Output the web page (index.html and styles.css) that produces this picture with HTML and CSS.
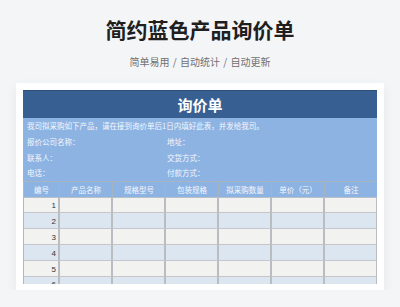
FILE: index.html
```html
<!DOCTYPE html>
<html lang="zh-CN">
<head>
<meta charset="utf-8">
<title>简约蓝色产品询价单</title>
<link rel="stylesheet" href="styles.css">
</head>
<body>
<div class="page">
  <h1 class="title">简约蓝色产品询价单</h1>
  <p class="subtitle">简单易用 / 自动统计 / 自动更新</p>
  <div class="card">
    <div class="sheet">
      <div class="sheet-title">询价单</div>
      <div class="info">
        <div class="info-cell full">我司拟采购如下产品，请在接到询价单后1日内填好此表，并发给我司。</div>
        <div class="info-cell">报价公司名称：</div>
        <div class="info-cell right">地址：</div>
        <div class="info-cell">联系人：</div>
        <div class="info-cell right">交货方式：</div>
        <div class="info-cell">电话：</div>
        <div class="info-cell right">付款方式：</div>
      </div>
      <div class="grid">
        <div class="th">编号</div>
        <div class="th">产品名称</div>
        <div class="th">规格型号</div>
        <div class="th">包装规格</div>
        <div class="th">拟采购数量</div>
        <div class="th">单价（元）</div>
        <div class="th">备注</div>

        <div class="td num">1</div><div class="td"></div><div class="td"></div><div class="td"></div><div class="td"></div><div class="td"></div><div class="td"></div>
        <div class="td num alt">2</div><div class="td alt"></div><div class="td alt"></div><div class="td alt"></div><div class="td alt"></div><div class="td alt"></div><div class="td alt"></div>
        <div class="td num">3</div><div class="td"></div><div class="td"></div><div class="td"></div><div class="td"></div><div class="td"></div><div class="td"></div>
        <div class="td num alt">4</div><div class="td alt"></div><div class="td alt"></div><div class="td alt"></div><div class="td alt"></div><div class="td alt"></div><div class="td alt"></div>
        <div class="td num">5</div><div class="td"></div><div class="td"></div><div class="td"></div><div class="td"></div><div class="td"></div><div class="td"></div>
        <div class="td num alt">6</div><div class="td alt"></div><div class="td alt"></div><div class="td alt"></div><div class="td alt"></div><div class="td alt"></div><div class="td alt"></div>
      </div>
    </div>
  </div>
</div>
</body>
</html>
```
FILE: styles.css
```css
* { box-sizing: border-box; }

html, body {
  margin: 0;
  padding: 0;
  background: #f4f5f7;
}

body {
  font-family: "Noto Sans CJK SC", "Noto Sans", sans-serif;
  color: #222;
}

.page {
  padding-top: 14px;
  display: flex;
  flex-direction: column;
  align-items: center;
}

.title {
  margin: 0;
  font-size: 21px;
  line-height: 30px;
  font-weight: 700;
  color: #1f1f1f;
}

.subtitle {
  margin: 11px 0 0;
  font-size: 10px;
  line-height: 14px;
  color: #707070;
  word-spacing: 1px;
}

.card {
  margin-top: 14px;
  width: 368px;
  height: 207px;
  background: #fff;
  padding: 7px 7px 6px;
  box-shadow: 0 4px 12px rgba(0, 0, 0, 0.06);
}

.sheet {
  height: 194px;
  overflow: hidden;
  display: flex;
  flex-direction: column;
}

.sheet-title {
  flex: 0 0 28px;
  background: #375f91;
  color: #fff;
  font-size: 15px;
  font-weight: 700;
  display: flex;
  align-items: center;
  justify-content: center;
  border-top: 1px solid #2e4f7a;
}

.info {
  display: grid;
  grid-template-columns: 142px 1fr;
  grid-auto-rows: 15.7px;
  background: #8db3e2;
  color: #f4f8fd;
  font-size: 7.5px;
}

.info-cell {
  display: flex;
  align-items: center;
  padding-left: 4px;
  white-space: nowrap;
}

.info-cell.full { grid-column: 1 / -1; }
.info-cell.right { padding-left: 2px; }

.grid {
  display: grid;
  grid-template-columns: 36px repeat(6, 53px);
  grid-auto-rows: 15.8px;
  border-left: 1px solid #b4b8bd;
  border-top: 1px solid #a9b4c2;
}

.th {
  background: #8db3e2;
  color: #f4f8fd;
  font-size: 7.5px;
  display: flex;
  align-items: center;
  justify-content: center;
  border-right: 1px solid #a6b3c3;
  border-bottom: 1px solid #b9c0c8;
  white-space: nowrap;
}

.td {
  background: #f2f2f0;
  border-right: 2px solid #b9bcc0;
  border-bottom: 1px solid #c3c6ca;
}

.td.alt { background: #dce6f1; }

.td.num {
  display: flex;
  align-items: flex-end;
  justify-content: flex-end;
  padding: 0 2px 1px 0;
  font-family: "Liberation Sans", Arial, sans-serif;
  font-size: 8px;
  line-height: 10px;
  color: #333;
}
```
